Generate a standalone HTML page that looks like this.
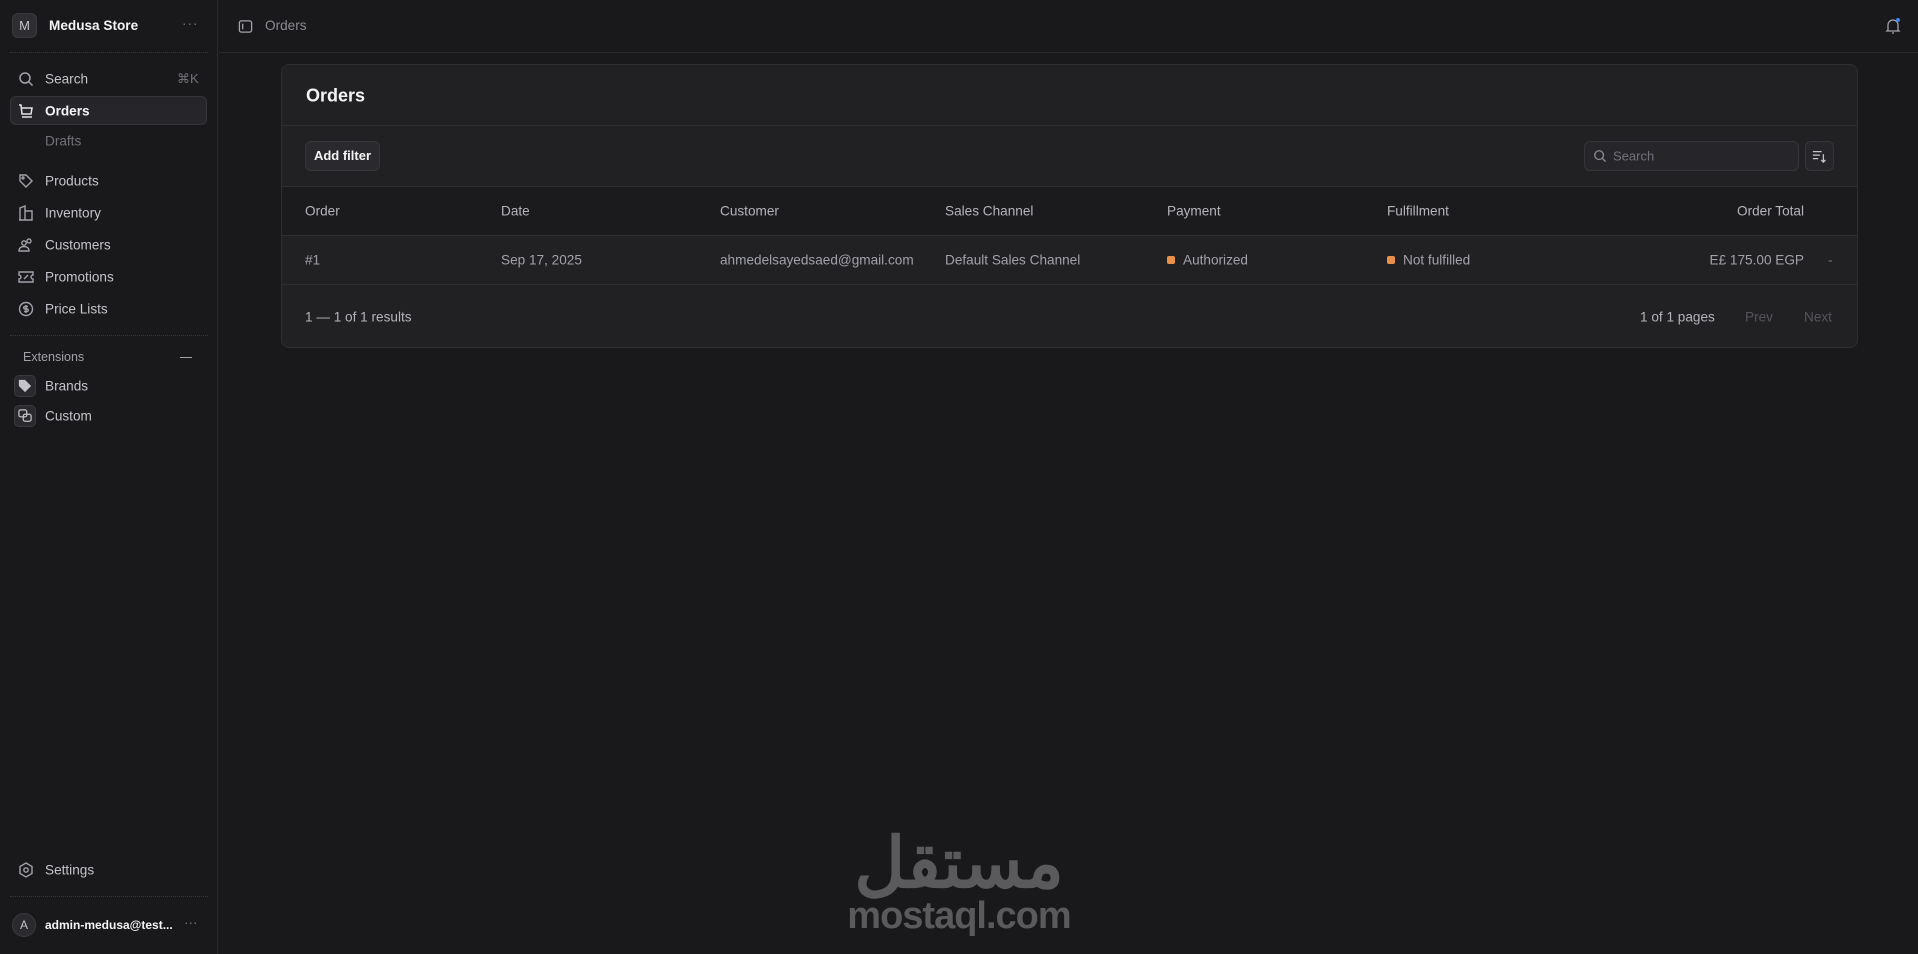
<!DOCTYPE html>
<html><head><meta charset="utf-8"><style>
*{box-sizing:border-box;margin:0;padding:0}
body{width:1918px;height:954px;background:#19191b;font-family:"Liberation Sans",sans-serif;font-size:13.6px;color:#a1a1aa;position:relative;overflow:hidden}
.abs{position:absolute;white-space:nowrap}
.side{position:absolute;left:0;top:0;width:218px;height:954px;border-right:1px solid #2a2a2d}
.dot{position:absolute;left:10px;width:198px;border-top:1px dotted #36363a}
.nav{position:absolute;left:45px;transform:translateY(-50%);color:#c4c4ca}
.ic{position:absolute;left:18px;transform:translateY(-50%)}
.card{position:absolute;left:281px;top:64px;width:1577px;height:284px;background:#212124;border:1px solid #2e2e32;border-radius:8px;overflow:hidden}
.hl{position:absolute;left:0;right:0;border-top:1px solid #2e2e32}
.c{position:absolute;transform:translateY(-50%);white-space:nowrap}
</style></head><body>
<div class="side">
 <div class="abs" style="left:12px;top:13px;width:25px;height:25px;border-radius:6px;background:#2e2e32;border:1px solid #3a3a3e;color:#c4c4ca;text-align:center;line-height:23px;font-size:13px">M</div>
 <div class="abs" style="left:49px;top:18px;color:#f4f4f5;font-weight:bold">Medusa Store</div>
 <div class="abs" style="left:182px;top:16px;color:#71717a;letter-spacing:1px">···</div>
 <div class="dot" style="top:52px"></div>
 <svg class="ic" style="top:79px" width="16" height="16" viewBox="0 0 16 16" fill="none" stroke="#a1a1aa" stroke-width="1.5"><circle cx="7" cy="7" r="5"/><path d="M11 11l3.5 3.5"/></svg>
 <div class="nav" style="top:79px">Search</div>
 <div class="abs" style="left:177px;top:71px;color:#71717a;font-size:13px">⌘K</div>
 <div class="abs" style="left:10px;top:96px;width:197px;height:29px;background:#26262a;border:1px solid #36363a;border-radius:6px"></div>
 <svg class="ic" style="top:111px" width="16" height="16" viewBox="0 0 16 16" fill="none" stroke="#e4e4e7" stroke-width="1.5"><path d="M1 2h2l1 9h9l1-6H4"/><path d="M4 14h10"/></svg>
 <div class="nav" style="top:111px;color:#f4f4f5;font-weight:bold">Orders</div>
 <div class="nav" style="top:141px;color:#71717a">Drafts</div>
 <svg class="ic" style="top:181px" width="16" height="16" viewBox="0 0 16 16" fill="none" stroke="#a1a1aa" stroke-width="1.4"><path d="M2 2h6l6 6-6 6-6-6z"/><circle cx="5" cy="5" r="1"/></svg>
 <div class="nav" style="top:181px">Products</div>
 <svg class="ic" style="top:213px" width="16" height="16" viewBox="0 0 16 16" fill="none" stroke="#a1a1aa" stroke-width="1.4"><path d="M2 15V3l5-2v14M7 6h7v9H1"/></svg>
 <div class="nav" style="top:213px">Inventory</div>
 <svg class="ic" style="top:245px" width="16" height="16" viewBox="0 0 16 16" fill="none" stroke="#a1a1aa" stroke-width="1.4"><circle cx="6" cy="6" r="2.2"/><circle cx="11" cy="4" r="2"/><path d="M1 14c0-3 2-4.5 5-4.5s5 1.5 5 4.5z"/></svg>
 <div class="nav" style="top:245px">Customers</div>
 <svg class="ic" style="top:277px" width="16" height="16" viewBox="0 0 16 16" fill="none" stroke="#a1a1aa" stroke-width="1.4"><path d="M1 3h14v3a2 2 0 000 4v3H1v-3a2 2 0 000-4z"/><path d="M6 10l4-4"/></svg>
 <div class="nav" style="top:277px">Promotions</div>
 <svg class="ic" style="top:309px" width="16" height="16" viewBox="0 0 16 16" fill="none" stroke="#a1a1aa" stroke-width="1.4"><circle cx="8" cy="8" r="6.5"/><path d="M10 5.5H7a1.2 1.2 0 000 2.5h2a1.2 1.2 0 010 2.5H6M8 4v8"/></svg>
 <div class="nav" style="top:309px">Price Lists</div>
 <div class="dot" style="top:335px"></div>
 <div class="abs" style="left:23px;top:350px;font-size:12.5px;color:#a1a1aa">Extensions</div>
 <div class="abs" style="left:180px;top:357px;width:12px;border-top:1.5px solid #a1a1aa"></div>
 <div class="abs" style="left:14px;top:375px;width:22px;height:22px;border-radius:5px;background:#2a2a2e;border:1px solid #3a3a3e"></div>
 <svg class="abs" style="left:18px;top:379px" width="14" height="14" viewBox="0 0 16 16"><path d="M1 1h7l7 7-7 7-7-7z" fill="#c4c4ca"/></svg>
 <div class="nav" style="top:386px">Brands</div>
 <div class="abs" style="left:14px;top:405px;width:22px;height:22px;border-radius:5px;background:#2a2a2e;border:1px solid #3a3a3e"></div>
 <svg class="abs" style="left:18px;top:409px" width="14" height="14" viewBox="0 0 16 16" fill="none" stroke="#c4c4ca" stroke-width="1.4"><rect x="1" y="1" width="9" height="8" rx="2"/><rect x="6" y="6" width="9" height="8" rx="2"/></svg>
 <div class="nav" style="top:416px">Custom</div>
 <svg class="ic" style="top:870px" width="16" height="16" viewBox="0 0 16 16" fill="none" stroke="#a1a1aa" stroke-width="1.4"><path d="M8 1l6 3.5v7L8 15l-6-3.5v-7z"/><circle cx="8" cy="8" r="2.2"/></svg>
 <div class="nav" style="top:870px">Settings</div>
 <div class="dot" style="top:896px"></div>
 <div class="abs" style="left:12px;top:913px;width:24px;height:24px;border-radius:50%;background:#2a2a2e;border:1px solid #3a3a3e;color:#c4c4ca;text-align:center;line-height:22px;font-size:12px">A</div>
 <div class="abs" style="left:45px;top:918px;color:#f4f4f5;font-weight:bold;font-size:12px">admin-medusa@test...</div>
 <div class="abs" style="left:184px;top:915px;color:#71717a">···</div>
</div>
<div class="abs" style="left:219px;top:52px;width:1699px;border-top:1px solid #2a2a2d"></div>
<svg class="abs" style="left:238px;top:19px" width="15" height="15" viewBox="0 0 16 16" fill="none" stroke="#a1a1aa" stroke-width="1.4"><rect x="1.5" y="2" width="13" height="12" rx="2"/><path d="M5 5v6"/></svg>
<div class="abs" style="left:265px;top:18px;color:#8b8b93">Orders</div>
<svg class="abs" style="left:1885px;top:17px" width="16" height="18" viewBox="0 0 16 18" fill="none" stroke="#a1a1aa" stroke-width="1.3"><path d="M3 13V8a5 5 0 0110 0v5l1 1H2z"/><path d="M7 16h2"/><circle cx="13" cy="3" r="2" fill="#3b82f6" stroke="none"/></svg>
<div class="card">
 <div class="c" style="left:24px;top:31px;font-size:18px;font-weight:bold;color:#f4f4f5">Orders</div>
 <div class="hl" style="top:60px"></div>
 <div class="abs" style="left:23px;top:76px;width:75px;height:30px;border-radius:6px;background:#2a2a2e;border:1px solid #36363a;color:#f4f4f5;font-weight:bold;font-size:13px;text-align:center;line-height:28px">Add filter</div>
 <div class="abs" style="left:1302px;top:76px;width:215px;height:30px;border-radius:6px;background:#26262a;border:1px solid #36363a"></div>
 <svg class="abs" style="left:1311px;top:84px" width="14" height="14" viewBox="0 0 16 16" fill="none" stroke="#8b8b93" stroke-width="1.5"><circle cx="7" cy="7" r="5"/><path d="M11 11l3.5 3.5"/></svg>
 <div class="c" style="left:1331px;top:91px;color:#71717a;font-size:13px">Search</div>
 <div class="abs" style="left:1523px;top:76px;width:29px;height:30px;border-radius:6px;background:#26262a;border:1px solid #36363a"></div>
 <svg class="abs" style="left:1530px;top:84px" width="14" height="14" viewBox="0 0 16 16" fill="none" stroke="#c4c4ca" stroke-width="1.5"><path d="M1 3h10M1 7h8M1 11h6M13 6v9M10.5 12.5L13 15l2.5-2.5"/></svg>
 <div class="hl" style="top:121px"></div>
 <div class="abs" style="left:0;top:122px;width:100%;height:48px;background:#1b1b1d"></div>
 <div class="hl" style="top:170px"></div>
 <div class="hl" style="top:219px"></div>
 <div class="c" style="left:23px;top:146px;color:#b4b4bb">Order</div>
 <div class="c" style="left:219px;top:146px;color:#b4b4bb">Date</div>
 <div class="c" style="left:438px;top:146px;color:#b4b4bb">Customer</div>
 <div class="c" style="left:663px;top:146px;color:#b4b4bb">Sales Channel</div>
 <div class="c" style="left:885px;top:146px;color:#b4b4bb">Payment</div>
 <div class="c" style="left:1105px;top:146px;color:#b4b4bb">Fulfillment</div>
 <div class="c" style="right:53px;top:146px;color:#b4b4bb">Order Total</div>
 <div class="c" style="left:23px;top:195px">#1</div>
 <div class="c" style="left:219px;top:195px">Sep 17, 2025</div>
 <div class="c" style="left:438px;top:195px">ahmedelsayedsaed@gmail.com</div>
 <div class="c" style="left:663px;top:195px">Default Sales Channel</div>
 <div class="abs" style="left:885px;top:191px;width:8px;height:8px;border-radius:2px;background:#e8914b"></div>
 <div class="c" style="left:901px;top:195px">Authorized</div>
 <div class="abs" style="left:1105px;top:191px;width:8px;height:8px;border-radius:2px;background:#e8914b"></div>
 <div class="c" style="left:1121px;top:195px">Not fulfilled</div>
 <div class="c" style="right:53px;top:195px">E£ 175.00 EGP</div>
 <div class="c" style="left:1546px;top:195px;color:#71717a">-</div>
 <div class="c" style="left:23px;top:252px;color:#b4b4bb">1 — 1 of 1 results</div>
 <div class="c" style="left:1358px;top:252px;color:#b4b4bb">1 of 1 pages</div>
 <div class="c" style="left:1463px;top:252px;color:#55555b">Prev</div>
 <div class="c" style="left:1522px;top:252px;color:#55555b">Next</div>
</div>
<div class="abs" style="left:842px;top:818px;width:234px;text-align:center;color:#5a5a5c;font-size:70px;font-weight:bold;font-family:'Noto Sans CJK SC','Liberation Sans',sans-serif;line-height:80px" dir="rtl">مستقل</div>
<div class="abs" style="left:842px;top:894px;width:234px;text-align:center;color:#5a5a5c;font-size:38px;font-weight:bold;line-height:44px;letter-spacing:-1px">mostaql.com</div>
</body></html>
